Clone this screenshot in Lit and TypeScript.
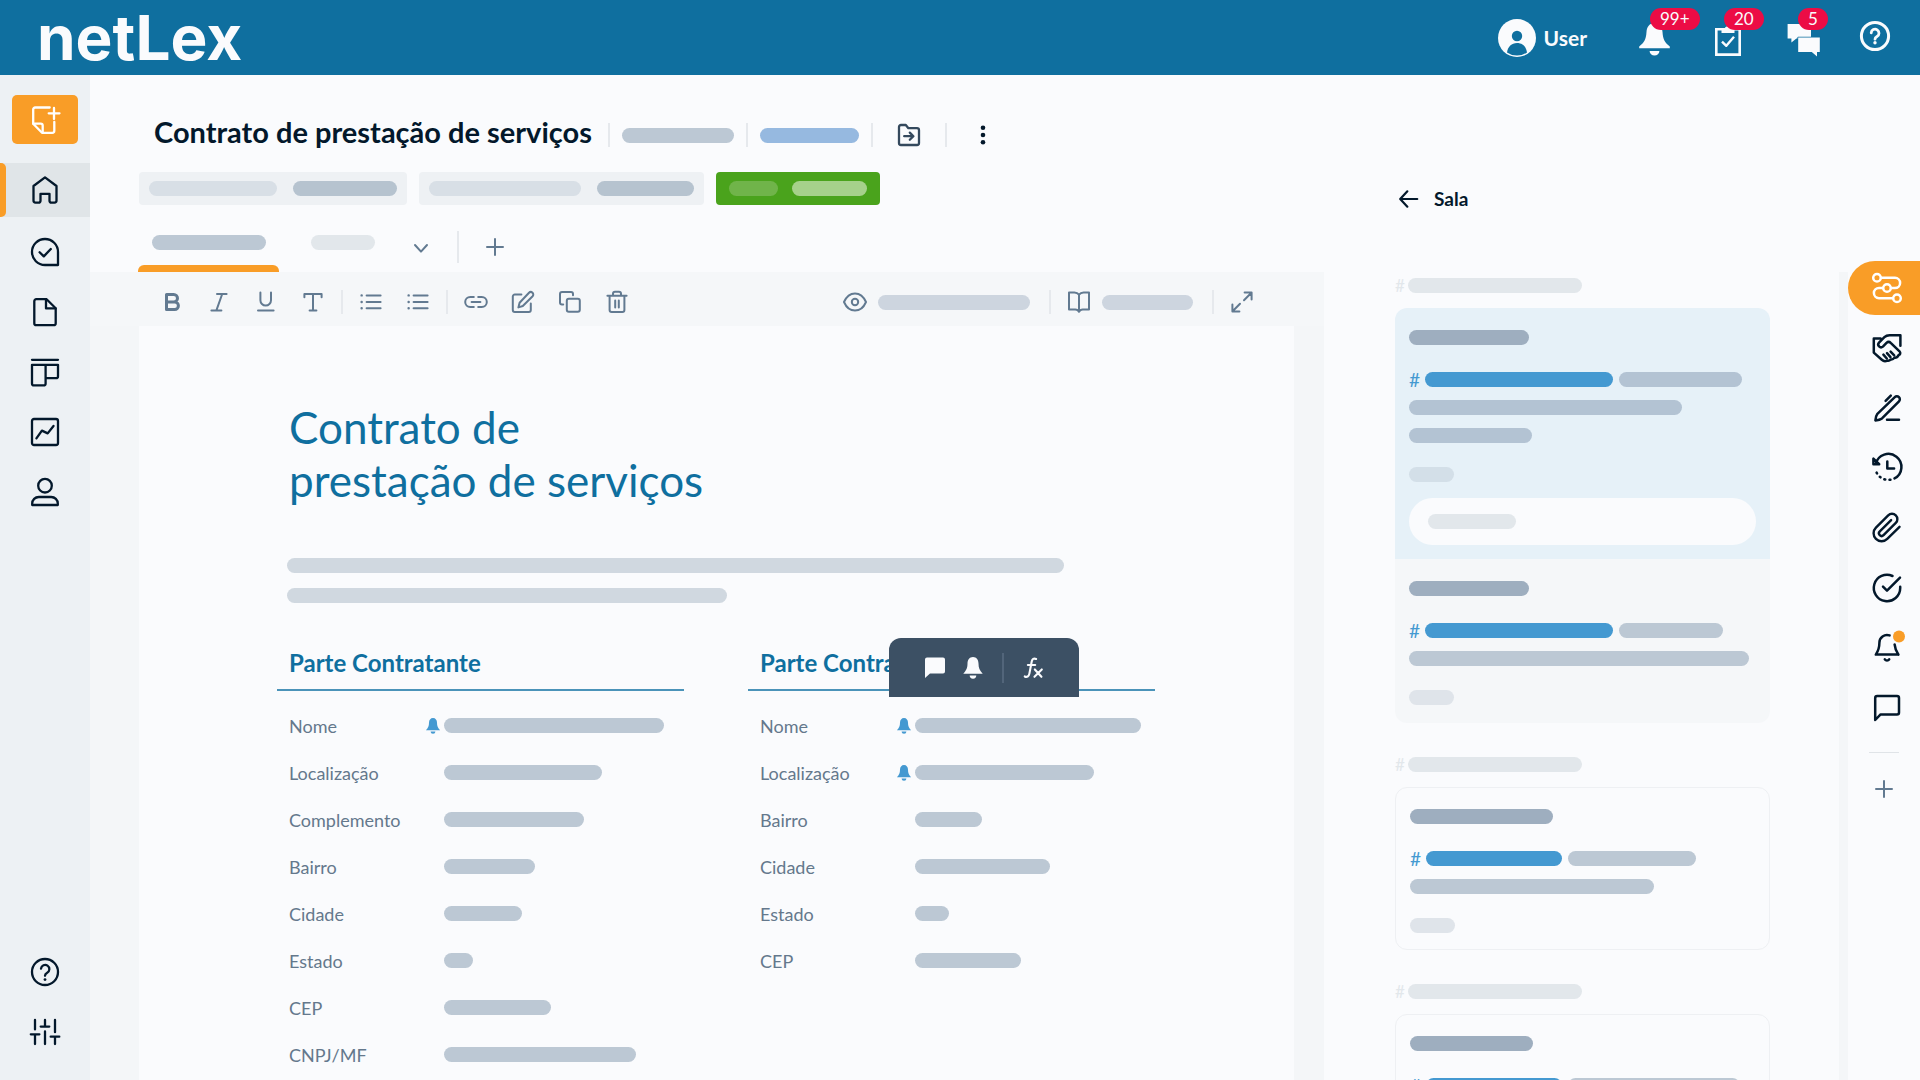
import { LitElement, html, svg, css, nothing, TemplateResult, SVGTemplateResult } from "lit";
import { customElement, property } from "lit/decorators.js";
import { classMap } from "lit/directives/class-map.js";

type Shape = SVGTemplateResult;

/* Line icons share a 32-unit grid unless a size is given. */
const icon = (shape: Shape, box = 32, size = 32): TemplateResult => html`
  <svg class="icon" width=${size} height=${size} viewBox="0 0 ${box} ${box}" aria-hidden="true">${shape}</svg>
`;

const bar = (width: number, tone = "mist"): TemplateResult =>
  html`<span class="bar ${tone}" style="width:${width}px"></span>`;

const navIcons = {
  create: svg`<path d="M20.7 3.5H6.2A2 2 0 0 0 4.2 5.5V19.7L13 28.8H23.3a2 2 0 0 0 2-2V18"/><path d="M4.2 19.7h7.500a2 2 0 0 1 2 2v6.600"/><path d="M25 4v11M19.700 9.300H30.500"/>`,
  home: svg`<path d="M16 3.4 4.5 12V26.6a2 2 0 0 0 2 2h3.2a1.8 1.8 0 0 0 1.8-1.8V19.8h9v7a1.8 1.8 0 0 0 1.8 1.8h3.2a2 2 0 0 0 2-2V12z"/>`,
  review: svg`<path d="M29 29H16A13 13 0 1 1 29 16z"/><path d="m10.6 16.2 4.2 4.2 7-7.4"/>`,
  file: svg`<path d="M17.6 3.2H7.3a2 2 0 0 0-2 2V27.2a2 2 0 0 0 2 2H24.7a2 2 0 0 0 2-2V12.2z"/><path d="M17 3.2v9.2h9.6"/>`,
  board: svg`<path d="M3 3.8H29M3 8.8H29V20.2a2 2 0 0 1-2 2H16.6V8.8M3 8.8V27.4a2 2 0 0 0 2 2h9.6a2 2 0 0 0 2-2V20"/>`,
  chart: svg`<rect x="3" y="3" width="26" height="26" rx="2"/><path d="m7.4 22.4 5.5-7.8 5.8 2.8 5.8-7.4"/>`,
  person: svg`<circle cx="16" cy="9.7" r="6.8"/><path d="M3.2 29V27.6a6.6 6.6 0 0 1 6.6-6.6H22.2a6.6 6.6 0 0 1 6.6 6.6V29z"/>`,
  help: svg`<circle cx="16" cy="16" r="13"/><path d="M12 12.6a4.2 4.2 0 1 1 6.2 4.2c-1.5.8-2.2 1.6-2.2 3"/><circle class="solid" cx="16" cy="23.6" r="1.4"/>`,
  tune: svg`<path d="M6 4v9.4M1.8 18.3h8.6M6 18.3V28M16 4v6.6M11.7 10.6h8.6M16 15.4V28M26 4v12.2M21.7 20.7h8.6M26 20.7V28"/>`,
};

const railIcons = {
  route: svg`<circle cx="6" cy="5.8" r="3.8"/><circle cx="16" cy="16" r="3.8"/><circle cx="26" cy="26.2" r="3.8"/><path d="M10 5.8H24a5 5 0 0 1 0 10.2h-4M12 16H8a5 5 0 0 0 0 10.2h14"/>`,
  handshake: svg`<path d="M29.4 13.8V3.2H18.6c-2.4 0-3.7.5-5.2 2L8 10.6a2.8 2.8 0 0 0 3.9 4l3.6-3.7c1.3-1.2 3-1.2 4.2 0l8.8 8.4c1.4 1.6.8 3.2-.9 3.8M9.6 6.4H2.8v14.2l8 7.2c1.8 1.6 3.6 1.8 5.4.8 1.4.4 2.7-.2 3.6-1.2 1.6.3 2.8-.5 3.7-1.8 1.8.2 3.2-.8 4.1-2.5"/><path d="m12.4 22.7 3.4 3.8M16 21.2l3.5 3.9M19.6 19.6l3.6 3.8"/>`,
  pen: svg`<path d="M23.8 5.2a2.9 2.9 0 0 1 4.2 4.1L11 26.4c-1.8 1.3-4 1.7-6.6 2 .3-2.6.6-4.8 2-6.6z"/><path d="m19.8 3.6-5.2 5.2M16 27.8H28"/>`,
  history: svg`<path d="M4.8 11.800A13 13 0 1 1 23.500 26.400"/><path d="M5.600 20.600A13 13 0 0 0 20 27.600" stroke-dasharray="1 4.200"/><path d="M2.400 6.600v5.600h5.800z"/><path d="M16.300 9.600v6.800h6.800"/>`,
  clip: svg`<path transform="scale(1.333)" stroke-width="1.8" d="M21.4 11.1l-9.2 9.1a6 6 0 0 1-8.5-8.5l9.2-9.2a4 4 0 0 1 5.7 5.7l-9.2 9.2a2 2 0 0 1-2.8-2.9l8.5-8.4"/>`,
  done: svg`<path d="M29.2 14.8V16A13.2 13.2 0 1 1 21.5 4"/><path d="M29 5.6 16 18.6l-4-4"/>`,
  alert: svg`<path d="M18.6 3.4A7.6 7.6 0 0 0 8.4 10.8c0 6-1.4 8.6-3.6 11.8H27.4M23.6 12.4c.3 4 1.6 6.8 3.8 10.2"/><path d="M13.8 27.4c1 1.6 3.4 1.6 4.4 0"/><circle class="dot" cx="28" cy="4.4" r="6"/>`,
  chat: svg`<path d="M28 20.4a2 2 0 0 1-2 2H9.6L4.2 28V6a2 2 0 0 1 2-2H26a2 2 0 0 1 2 2z"/>`,
};

const toolIcons = {
  bold: svg`<path stroke-width="3" d="M6.5 4.5h7.2a3.8 3.8 0 0 1 0 7.6H6.5zM6.5 12.1h8.2a3.7 3.7 0 0 1 0 7.4H6.5z"/>`,
  italic: svg`<path d="M10 4h9.6M4.4 20.4h10M15.2 4 9.4 20.4"/>`,
  underline: svg`<path d="M6.4 2.6v7.6a5.3 5.3 0 0 0 10.6 0V2.6M4 20.4h15.6"/>`,
  type: svg`<path d="M3.4 7.2V4h17.2v3.2M12 4v16.4M8.6 20.4h6.8"/>`,
  list: svg`<path d="M7.6 5.4H21.6M7.6 12H21.6M7.6 18.2H21.6"/><path stroke-width="2.4" d="M2.6 5.4h.1M2.6 12h.1M2.6 18.2h.1"/>`,
  link: svg`<path d="M9.8 17H6.2a4.8 4.8 0 0 1 0-10h3.6M14.2 7h3.6a4.8 4.8 0 0 1 0 10h-3.6M7.6 12h8.8"/>`,
  edit: svg`<path d="M10.4 4.6H3.8a2 2 0 0 0-2 2V20a2 2 0 0 0 2 2h14a2 2 0 0 0 2-2v-6.6"/><path d="M18 2.8a2.4 2.4 0 0 1 3.6 3.4L11.8 16l-4.4 1.4 1.2-4.6z"/>`,
  copy: svg`<rect x="8.8" y="8.8" width="13" height="13" rx="2"/><path d="M5.2 14.6H4a2 2 0 0 1-2-2V4a2 2 0 0 1 2-2h9a2 2 0 0 1 2 2v1.2"/>`,
  trash: svg`<path d="M2.4 5.8h19.2M4.6 5.8V20a2 2 0 0 0 2 2h10.8a2 2 0 0 0 2-2V5.8M8 5.6V3.8a2 2 0 0 1 2-2h4a2 2 0 0 1 2 2v1.8M10.2 10.4v7M13.8 10.4v7"/>`,
  eye: svg`<path d="M1 12C3 7.4 7 3.400 12 3.400s9 4 11 8.600c-2 4.600-6 8.600-11 8.600S3 16.600 1 12z"/><circle cx="12" cy="12" r="3.200"/>`,
  book: svg`<path d="M12 4.600C10.800 3 9.400 2.400 7.400 2.400H2V19.400H8.200c2 0 3.200.8 3.800 2.400.6-1.600 1.800-2.400 3.800-2.400H22V2.400H16.600C14.600 2.400 13.200 3 12 4.600zM12 4.600V21"/>`,
  expand: svg`<path d="M14.600 2.600h7v7M21.400 2.800 14 10.200M9.400 21.400h-7v-7M2.600 21.200 10 13.800"/>`,
};

const bellSolid = svg`<path class="solid" d="M12 0C8.200 0 6 3.200 6 7c0 4.800-1.200 7.200-4.600 11.400h21.200C19.200 14.200 18 11.800 18 7c0-3.800-2.200-7-6-7z"/><path class="solid" d="M8.400 20.200h7.200a3.600 3.400 0 0 1-7.200 0z"/>`;

const headerIcons = {
  bell: svg`<path class="solid" d="M16.500-1C11.500-1 8.800 3 8.500 8 8 16 6 18.500 1.200 22.400V24.200H31.800V22.400C27 18.500 25 16 24.500 8c-.3-5-3-9-8-9z"/><path class="solid" d="M11.600 27h9.800a4.900 4.600 0 0 1-9.800 0z"/>`,
  tasks: svg`<path stroke-width="2.600" stroke-linejoin="miter" d="M4.300 5.200H27.700V30.600H4.300z"/><path class="solid" d="M9.500 9V5h3a3.600 3.600 0 0 1 7 0h3v4z"/><path stroke-width="2.400" stroke-linecap="butt" d="m10 17.600 4.300 4.200 7.700-9"/>`,
  chats: svg`<path class="solid" d="M1.600 0H25V14.600H10.400L5.400 18.600V14.600H1.600z"/><path class="solid cut" d="M12.200 13.600H33.800V28H31V32.400L25.800 28H12.200z"/>`,
  help: svg`<circle cx="15" cy="12" r="13.600" stroke-width="3"/><path stroke-width="2.800" d="M11.200 8.800a3.900 3.900 0 1 1 5.800 3.700c-1.500.9-2 1.500-2 2.700"/><circle class="solid" cx="15" cy="18.800" r="1.700"/>`,
};

const iconStyles = css`
  .icon {
    display: block;
    flex: none;
    overflow: visible;
    fill: none;
    stroke: currentColor;
    stroke-width: 2.3;
    stroke-linecap: round;
    stroke-linejoin: round;
  }
  .icon .solid {
    fill: currentColor;
    stroke: none;
  }
  .icon .dot {
    fill: #f99d27;
    stroke: none;
  }
`;

const baseStyles = css`
  :host,
  * {
    box-sizing: border-box;
  }
  button {
    display: flex;
    align-items: center;
    justify-content: center;
    margin: 0;
    padding: 0;
    border: 0;
    background: none;
    color: inherit;
    font: inherit;
    cursor: pointer;
  }
  a {
    color: inherit;
    text-decoration: none;
  }
  h1,
  h2,
  h3,
  dl,
  dd,
  dt {
    margin: 0;
    padding: 0;
  }
`;

const barStyles = css`
  .bar {
    display: block;
    flex: none;
    height: 15px;
    border-radius: 8px;
  }
  .mist {
    background: #bcc8d4;
  }
  .fog {
    background: #d8dfe6;
  }
  .slate {
    background: #b6c3cf;
  }
  .steel {
    background: #9eaebf;
  }
  .haze {
    background: #e2e7eb;
  }
  .pearl {
    background: #d0d8e0;
  }
  .cloud {
    background: #cdd5df;
  }
  .sky {
    background: #96b9e0;
  }
  .blue {
    background: #4499d1;
  }
  .leaf {
    background: #70b44a;
  }
  .mint {
    background: #a6d18b;
  }
`;

@customElement("top-bar")
export class TopBar extends LitElement {
  static styles = [
    baseStyles,
    iconStyles,
    css`
      :host {
        display: flex;
        align-items: center;
        justify-content: space-between;
        flex: none;
        height: 75px;
        padding: 0 28px 0 37px;
        background: #0f6f9f;
        color: #fafbfd;
      }
      .logo {
        font-family: Inter, Lato, sans-serif;
        font-size: 62px;
        line-height: 75px;
        font-weight: 700;
      }
      .actions {
        display: flex;
        align-items: center;
        gap: 42px;
      }
      .user {
        gap: 8px;
        margin-right: 9px;
        font-size: 21px;
        line-height: 26px;
        font-weight: 700;
      }
      .action {
        position: relative;
        width: 32px;
        height: 32px;
        margin-top: 5px;
      }
      .badge {
        position: absolute;
        top: -16px;
        left: 12px;
        height: 22px;
        padding: 0 10px;
        border-radius: 11px;
        background: #ec0c45;
        font-size: 17px;
        line-height: 22px;
      }
      .icon .cut {
        stroke: #0f6f9f;
        stroke-width: 1.6;
        paint-order: stroke;
      }
      .face {
        fill: #0f6f9f;
        stroke: none;
      }
    `,
  ];

  private action(label: string, shape: Shape, count?: string) {
    return html`<button class="action" aria-label=${label}>
      ${icon(shape)}${count ? html`<span class="badge">${count}</span>` : nothing}
    </button>`;
  }

  render() {
    return html`
      <a class="logo" href="#">netLex</a>
      <div class="actions">
        <button class="user">
          <svg class="icon" width="38" height="38" viewBox="0 0 38 38" aria-hidden="true">
            <circle class="solid" cx="19" cy="19" r="19" />
            <circle class="face" cx="19" cy="17" r="5.200" />
            <path class="face" d="M9 33.400C9.800 27.600 13.600 24 19 24s9.200 3.600 10 9.400A17.400 17.400 0 0 1 9 33.400z" />
          </svg>
          User
        </button>
        ${this.action("Notificações", headerIcons.bell, "99+")}
        ${this.action("Tarefas", headerIcons.tasks, "20")}
        ${this.action("Conversas", headerIcons.chats, "5")}
        ${this.action("Ajuda", headerIcons.help)}
      </div>
    `;
  }
}

@customElement("side-nav")
export class SideNav extends LitElement {
  static styles = [
    baseStyles,
    iconStyles,
    css`
      :host {
        display: flex;
        flex-direction: column;
        flex: none;
        width: 90px;
        padding: 20px 0 21px;
        background: #edf1f4;
        color: #03182b;
      }
      .create {
        width: 66px;
        height: 49px;
        margin: 0 auto 19px;
        border-radius: 5px;
        background: #f99d27;
        color: #ffffff;
      }
      .group {
        display: flex;
        flex-direction: column;
        gap: 6px;
      }
      .main {
        margin-top: 8px;
      }
      .bottom {
        margin-top: auto;
      }
      .item {
        width: 100%;
        height: 54px;
      }
      .active {
        position: relative;
        background: #e0e5e8;
      }
      .active::before {
        content: "";
        position: absolute;
        inset: 0 auto 0 0;
        width: 6px;
        border-radius: 0 5px 5px 0;
        background: #f99d27;
      }
    `,
  ];

  private item(label: string, shape: Shape, active = false) {
    return html`<button class=${classMap({ item: true, active })} aria-label=${label}>${icon(shape)}</button>`;
  }

  render() {
    return html`
      <button class="create" aria-label="Novo documento">${icon(navIcons.create)}</button>
      <nav class="group">${this.item("Início", navIcons.home, true)}</nav>
      <nav class="group main">
        ${this.item("Aprovações", navIcons.review)} ${this.item("Documentos", navIcons.file)}
        ${this.item("Quadros", navIcons.board)} ${this.item("Relatórios", navIcons.chart)}
        ${this.item("Pessoas", navIcons.person)}
      </nav>
      <nav class="group bottom">${this.item("Ajuda", navIcons.help)} ${this.item("Ajustes", navIcons.tune)}</nav>
    `;
  }
}

interface Field {
  label: string;
  width: number;
  bell?: boolean;
}

const contractor: Field[] = [
  { label: "Nome", width: 220, bell: true },
  { label: "Localização", width: 158 },
  { label: "Complemento", width: 140 },
  { label: "Bairro", width: 91 },
  { label: "Cidade", width: 78 },
  { label: "Estado", width: 29 },
  { label: "CEP", width: 107 },
  { label: "CNPJ/MF", width: 192 },
];

const contracted: Field[] = [
  { label: "Nome", width: 226, bell: true },
  { label: "Localização", width: 179, bell: true },
  { label: "Bairro", width: 67 },
  { label: "Cidade", width: 135 },
  { label: "Estado", width: 34 },
  { label: "CEP", width: 106 },
];

@customElement("contract-editor")
export class ContractEditor extends LitElement {
  static styles = [
    baseStyles,
    iconStyles,
    barStyles,
    css`
      :host {
        display: flex;
        flex-direction: column;
        min-width: 0;
        flex: 1;
        color: #03182b;
      }
      .heading {
        display: flex;
        align-items: flex-start;
        padding: 42px 0 0 64px;
      }
      .title {
        font-size: 29px;
        line-height: 30px;
        font-weight: 700;
        white-space: nowrap;
      }
      .meta {
        display: flex;
        align-items: center;
        gap: 12px;
        height: 36px;
        margin-left: 16px;
      }
      .rule {
        flex: none;
        width: 2px;
        height: 24px;
        background: #e6e9ed;
      }
      .square {
        width: 48px;
        height: 36px;
        color: #34495d;
      }
      .dots {
        color: #03182b;
      }
      .chips {
        display: flex;
        gap: 12px;
        padding: 19px 0 0 49px;
      }
      .chip {
        gap: 16px;
        height: 33px;
        padding: 0 10px;
        border-radius: 4px;
        background: #eef1f4;
      }
      .done {
        gap: 14px;
        padding: 0 13px;
        background: #4aa31c;
      }
      .tabs {
        display: flex;
        align-items: flex-start;
        padding: 17px 0 0 48px;
      }
      .tab {
        flex-direction: column;
        justify-content: flex-start;
        gap: 15px;
        height: 50px;
        padding: 13px 13px 0;
      }
      .tab + .tab {
        margin-left: 19px;
      }
      .current::after {
        content: "";
        width: 141px;
        height: 7px;
        border-radius: 6px 6px 0 0;
        background: #f99d27;
      }
      .current {
        width: 141px;
      }
      .tab-tools {
        display: flex;
        align-items: center;
        gap: 20px;
        height: 50px;
        margin-left: 17px;
        color: #627a91;
      }
      .tab-tools .rule {
        height: 32px;
      }
      .tab-tools button {
        width: 32px;
        height: 32px;
      }
      .toolbar {
        display: flex;
        align-items: center;
        justify-content: space-between;
        flex: none;
        height: 54px;
        padding: 6px 68px 0;
        background: #f5f7f9;
        color: #627a91;
      }
      .tools {
        display: flex;
        align-items: center;
        gap: 14px;
      }
      .set {
        display: flex;
        gap: 19px;
      }
      .tool {
        width: 28px;
        height: 28px;
      }
      .view {
        gap: 9px;
        padding-right: 5px;
      }
      .view .icon {
        margin: 0 2px;
      }
      .toolbar .icon,
      .tab-tools .icon {
        stroke-width: 2;
      }
      .desk {
        flex: 1;
        min-height: 0;
        overflow: hidden;
        padding: 0 30px 0 49px;
        background: #f4f6f8;
      }
      .paper {
        min-height: 100%;
        padding: 75px 139px 40px 138px;
        background: #fafbfd;
      }
      .doc-title {
        padding-left: 12px;
        color: #0f6f9f;
        font-size: 44px;
        line-height: 53px;
        font-weight: 400;
      }
      .intro {
        display: flex;
        flex-direction: column;
        gap: 15px;
        padding: 51px 0 45px 10px;
      }
      .parties {
        display: grid;
        grid-template-columns: 1fr 1fr;
        gap: 64px;
      }
      .party {
        position: relative;
      }
      .party-title {
        padding: 0 12px 12px;
        border-bottom: 2px solid #4a93b9;
        color: #0f6f9f;
        font-size: 24px;
        line-height: 29px;
        font-weight: 700;
      }
      .fields {
        padding-top: 11px;
      }
      .field {
        display: grid;
        grid-template-columns: 136px 19px 1fr;
        align-items: center;
        height: 47px;
        padding-left: 12px;
      }
      .label {
        color: #64788c;
        font-size: 18px;
        line-height: 22px;
      }
      .mark {
        color: #4499d1;
      }
      .value {
        display: flex;
      }
      .popup {
        position: absolute;
        top: -10px;
        left: 141px;
        display: flex;
        align-items: center;
        justify-content: center;
        gap: 14px;
        width: 190px;
        height: 59px;
        border-radius: 12px 12px 0 0;
        background: #3c5064;
        color: #fafbfd;
      }
      .popup button {
        width: 24px;
        height: 24px;
      }
      .popup .rule {
        height: 30px;
        margin: 0 3px;
        background: #52657a;
      }
    `,
  ];

  private tool(label: string, shape: Shape) {
    return html`<button class="tool" aria-label=${label}>${icon(shape, 24, 24)}</button>`;
  }

  private party(title: string, fields: Field[], overlay: unknown = nothing) {
    return html`<section class="party">
      <h3 class="party-title">${title}</h3>
      <dl class="fields">
        ${fields.map(
          (f) => html`<div class="field">
            <dt class="label">${f.label}</dt>
            <span class="mark">${f.bell ? icon(bellSolid, 24, 16) : nothing}</span>
            <dd class="value">${bar(f.width)}</dd>
          </div>`,
        )}
      </dl>
      ${overlay}
    </section>`;
  }

  render() {
    const rule = html`<span class="rule"></span>`;
    return html`
      <header class="heading">
        <h1 class="title">Contrato de prestação de serviços</h1>
        <div class="meta">
          ${rule} ${bar(112)} ${rule} ${bar(99, "sky")} ${rule}
          <button class="square" aria-label="Mover para pasta">
            ${icon(
              svg`<path d="M2 4a2 2 0 0 1 2-2H8.800L11.400 5.200H20a2 2 0 0 1 2 2V20a2 2 0 0 1-2 2H4a2 2 0 0 1-2-2z"/><path d="M7.200 13.200h9M12.800 9.600l3.600 3.600-3.600 3.600"/>`,
              24,
              24,
            )}
          </button>
          ${rule}
          <button class="square dots" aria-label="Mais opções">
            ${icon(
              svg`<circle class="solid" cx="12" cy="4.800" r="2.300"/><circle class="solid" cx="12" cy="12" r="2.300"/><circle class="solid" cx="12" cy="19.200" r="2.300"/>`,
              24,
              24,
            )}
          </button>
        </div>
      </header>
      <div class="chips">
        <button class="chip" aria-label="Etapa">${bar(128, "fog")}${bar(104, "slate")}</button>
        <button class="chip" aria-label="Responsável">${bar(152, "fog")}${bar(97, "slate")}</button>
        <button class="chip done" aria-label="Situação">${bar(49, "leaf")}${bar(75, "mint")}</button>
      </div>
      <nav class="tabs">
        <button class="tab current" aria-label="Documento">${bar(114)}</button>
        <button class="tab" aria-label="Anexo">${bar(64, "haze")}</button>
        <div class="tab-tools">
          <button aria-label="Mais abas">${icon(svg`<path d="m6 10 6 6.600 6-6.600"/>`, 24, 24)}</button>
          ${rule}
          <button aria-label="Adicionar aba">${icon(svg`<path d="M12 4v16M4 12h16"/>`, 24, 24)}</button>
        </div>
      </nav>
      <div class="toolbar" role="toolbar">
        <div class="tools">
          <div class="set">
            ${this.tool("Negrito", toolIcons.bold)} ${this.tool("Itálico", toolIcons.italic)}
            ${this.tool("Sublinhado", toolIcons.underline)} ${this.tool("Texto", toolIcons.type)}
          </div>
          ${rule}
          <div class="set">${this.tool("Lista", toolIcons.list)} ${this.tool("Sublista", toolIcons.list)}</div>
          ${rule}
          <div class="set">
            ${this.tool("Link", toolIcons.link)} ${this.tool("Editar", toolIcons.edit)}
            ${this.tool("Copiar", toolIcons.copy)} ${this.tool("Excluir", toolIcons.trash)}
          </div>
        </div>
        <div class="tools">
          <button class="view" aria-label="Visualização">${icon(toolIcons.eye, 24, 24)}${bar(152, "cloud")}</button>
          ${rule}
          <button class="view" aria-label="Leitura">${icon(toolIcons.book, 24, 24)}${bar(91, "cloud")}</button>
          ${rule} ${this.tool("Expandir", toolIcons.expand)}
        </div>
      </div>
      <div class="desk">
        <article class="paper">
          <h2 class="doc-title">Contrato de<br />prestação de serviços</h2>
          <div class="intro">${bar(777, "pearl")}${bar(440, "pearl")}</div>
          <div class="parties">
            ${this.party("Parte Contratante", contractor)}
            ${this.party(
              "Parte Contratada",
              contracted,
              html`<div class="popup" role="toolbar">
                <button aria-label="Comentar">
                  ${icon(svg`<path class="solid" d="M4 1.500H20a2 2 0 0 1 2 2V15.500a2 2 0 0 1-2 2H7L2 22V3.500a2 2 0 0 1 2-2z"/>`, 24, 24)}
                </button>
                <button aria-label="Notificar">${icon(bellSolid, 24, 22)}</button>
                ${rule}
                <button aria-label="Fórmula">
                  ${icon(
                    svg`<path d="M15.400 2.200c-2.600-1.200-4.200 0-4.800 2.800L8 18.400c-.6 2.800-2.600 4-5 2.800M6.400 8.800h8M14 13.600l7.200 8M21.600 13.600l-8 8"/>`,
                    24,
                    22,
                  )}
                </button>
              </div>`,
            )}
          </div>
        </article>
      </div>
    `;
  }
}

/* One comment card: heading, a mention line, further lines and a timestamp. */
@customElement("room-card")
export class RoomCard extends LitElement {
  static styles = [
    baseStyles,
    barStyles,
    css`
      :host {
        display: block;
        padding: 21px 14px 16px;
        border: 1px solid #eef0f3;
        border-radius: 12px;
      }
      :host([tone="active"]) {
        padding-top: 22px;
        padding-bottom: 14px;
        border: 0;
        border-radius: 12px 12px 0 0;
        background: #e6f1f8;
      }
      :host([tone="quiet"]) {
        padding-top: 22px;
        padding-bottom: 18px;
        border: 0;
        border-radius: 0 0 12px 12px;
        background: #f5f7f9;
      }
      .lines {
        display: flex;
        flex-direction: column;
        gap: 13px;
        padding: 27px 0 24px;
      }
      .mention {
        display: flex;
        align-items: center;
        gap: 6px;
        height: 15px;
      }
      .hash {
        width: 10px;
        color: #4499d1;
        font-size: 19px;
        line-height: 20px;
      }
      .reply {
        position: relative;
        display: block;
        margin-top: 16px;
      }
      .input {
        display: block;
        width: 100%;
        height: 47px;
        padding: 0 20px;
        border: 0;
        border-radius: 24px;
        background: #fafbfd;
        font: inherit;
      }
      .hint {
        position: absolute;
        top: 16px;
        left: 19px;
      }
      .stamp {
        background: #dfe4ea;
      }
      :host([tone="active"]) .mist {
        background: #b3c3d3;
      }
      :host([tone="active"]) .stamp {
        background: #d3dfe8;
      }
    `,
  ];

  @property({ reflect: true }) tone = "plain";
  @property({ type: Number }) heading = 120;
  @property({ attribute: false }) mention: number[] = [188, 123];
  @property({ attribute: false }) lines: number[] = [];
  @property({ type: Boolean }) reply = false;

  render() {
    return html`
      ${bar(this.heading, "steel")}
      <div class="lines">
        <div class="mention"><span class="hash">#</span>${bar(this.mention[0], "blue")}${bar(this.mention[1])}</div>
        ${this.lines.map((w) => bar(w))}
      </div>
      ${bar(45, "stamp")}
      ${this.reply
        ? html`<div class="reply">
            <input class="input" type="text" aria-label="Responder" />
            <span class="hint">${bar(88, "haze")}</span>
          </div>`
        : nothing}
    `;
  }
}

@customElement("room-panel")
export class RoomPanel extends LitElement {
  static styles = [
    baseStyles,
    iconStyles,
    barStyles,
    css`
      :host {
        display: flex;
        flex-direction: column;
        flex: none;
        gap: 34px;
        width: 515px;
        padding: 110px 69px 0 71px;
        overflow: hidden;
        color: #03182b;
      }
      .back {
        align-self: flex-start;
        gap: 14px;
        height: 28px;
        margin: 0 0 31px 3px;
        font-size: 19px;
        line-height: 28px;
        font-weight: 700;
      }
      .topic {
        display: flex;
        flex-direction: column;
        flex: none;
        gap: 15px;
      }
      .name {
        display: flex;
        align-items: center;
        gap: 3px;
        height: 15px;
      }
      .hash {
        width: 10px;
        color: #e2e7eb;
        font-size: 17px;
        line-height: 20px;
      }
    `,
  ];

  private topic(cards: TemplateResult) {
    return html`<section class="topic">
      <div class="name"><span class="hash">#</span>${bar(174, "haze")}</div>
      <div>${cards}</div>
    </section>`;
  }

  render() {
    return html`
      <button class="back">
        ${icon(svg`<path stroke-width="2.400" d="M21 12H2.600M10.200 3.600 2.400 12l7.800 8.400"/>`, 24, 22)} Sala
      </button>
      ${this.topic(html`
        <room-card tone="active" .heading=${120} .mention=${[188, 123]} .lines=${[273, 123]} .reply=${true}></room-card>
        <room-card tone="quiet" .heading=${120} .mention=${[188, 104]} .lines=${[340]}></room-card>
      `)}
      ${this.topic(html`<room-card .heading=${143} .mention=${[136, 128]} .lines=${[244]}></room-card>`)}
      ${this.topic(html`<room-card .heading=${123} .mention=${[136, 172]} .lines=${[244]}></room-card>`)}
    `;
  }
}

@customElement("tool-rail")
export class ToolRail extends LitElement {
  static styles = [
    baseStyles,
    iconStyles,
    css`
      :host {
        display: flex;
        flex: none;
        width: 81px;
        color: #03182b;
      }
      .track {
        width: 9px;
        margin-top: 197px;
        background: #f4f6f8;
      }
      .items {
        display: flex;
        flex-direction: column;
        flex: 1;
        gap: 6px;
        padding-top: 186px;
      }
      .item {
        flex: none;
        height: 54px;
        padding-left: 6px;
      }
      .active {
        border-radius: 27px 0 0 27px;
        background: #f99d27;
        color: #ffffff;
      }
      .rule {
        flex: none;
        width: 30px;
        height: 1px;
        margin: 11px auto 3px;
        background: #e0e4e8;
      }
      .add {
        padding-left: 0;
        color: #627a91;
      }
      .icon {
        stroke-width: 2.5;
      }
      .add .icon {
        stroke-width: 2;
      }
    `,
  ];

  private item(label: string, shape: Shape, active = false) {
    return html`<button class=${classMap({ item: true, active })} aria-label=${label}>${icon(shape)}</button>`;
  }

  render() {
    return html`
      <div class="track"></div>
      <nav class="items">
        ${this.item("Fluxo", railIcons.route, true)} ${this.item("Negociação", railIcons.handshake)}
        ${this.item("Assinaturas", railIcons.pen)} ${this.item("Histórico", railIcons.history)}
        ${this.item("Anexos", railIcons.clip)} ${this.item("Tarefas", railIcons.done)}
        ${this.item("Alertas", railIcons.alert)} ${this.item("Comentários", railIcons.chat)}
        <div class="rule"></div>
        <button class="item add" aria-label="Adicionar">${icon(svg`<path d="M12 4v16M4 12h16"/>`, 24, 24)}</button>
      </nav>
    `;
  }
}

@customElement("app-root")
export class AppRoot extends LitElement {
  static styles = css`
    :host {
      display: flex;
      flex-direction: column;
      height: 100vh;
      overflow: hidden;
      background: #fafbfd;
      font-family: Lato, "Open Sans", sans-serif;
    }
    .body {
      display: flex;
      flex: 1;
      min-height: 0;
    }
  `;

  render() {
    return html`
      <top-bar></top-bar>
      <div class="body">
        <side-nav></side-nav>
        <contract-editor></contract-editor>
        <room-panel></room-panel>
        <tool-rail></tool-rail>
      </div>
    `;
  }
}
